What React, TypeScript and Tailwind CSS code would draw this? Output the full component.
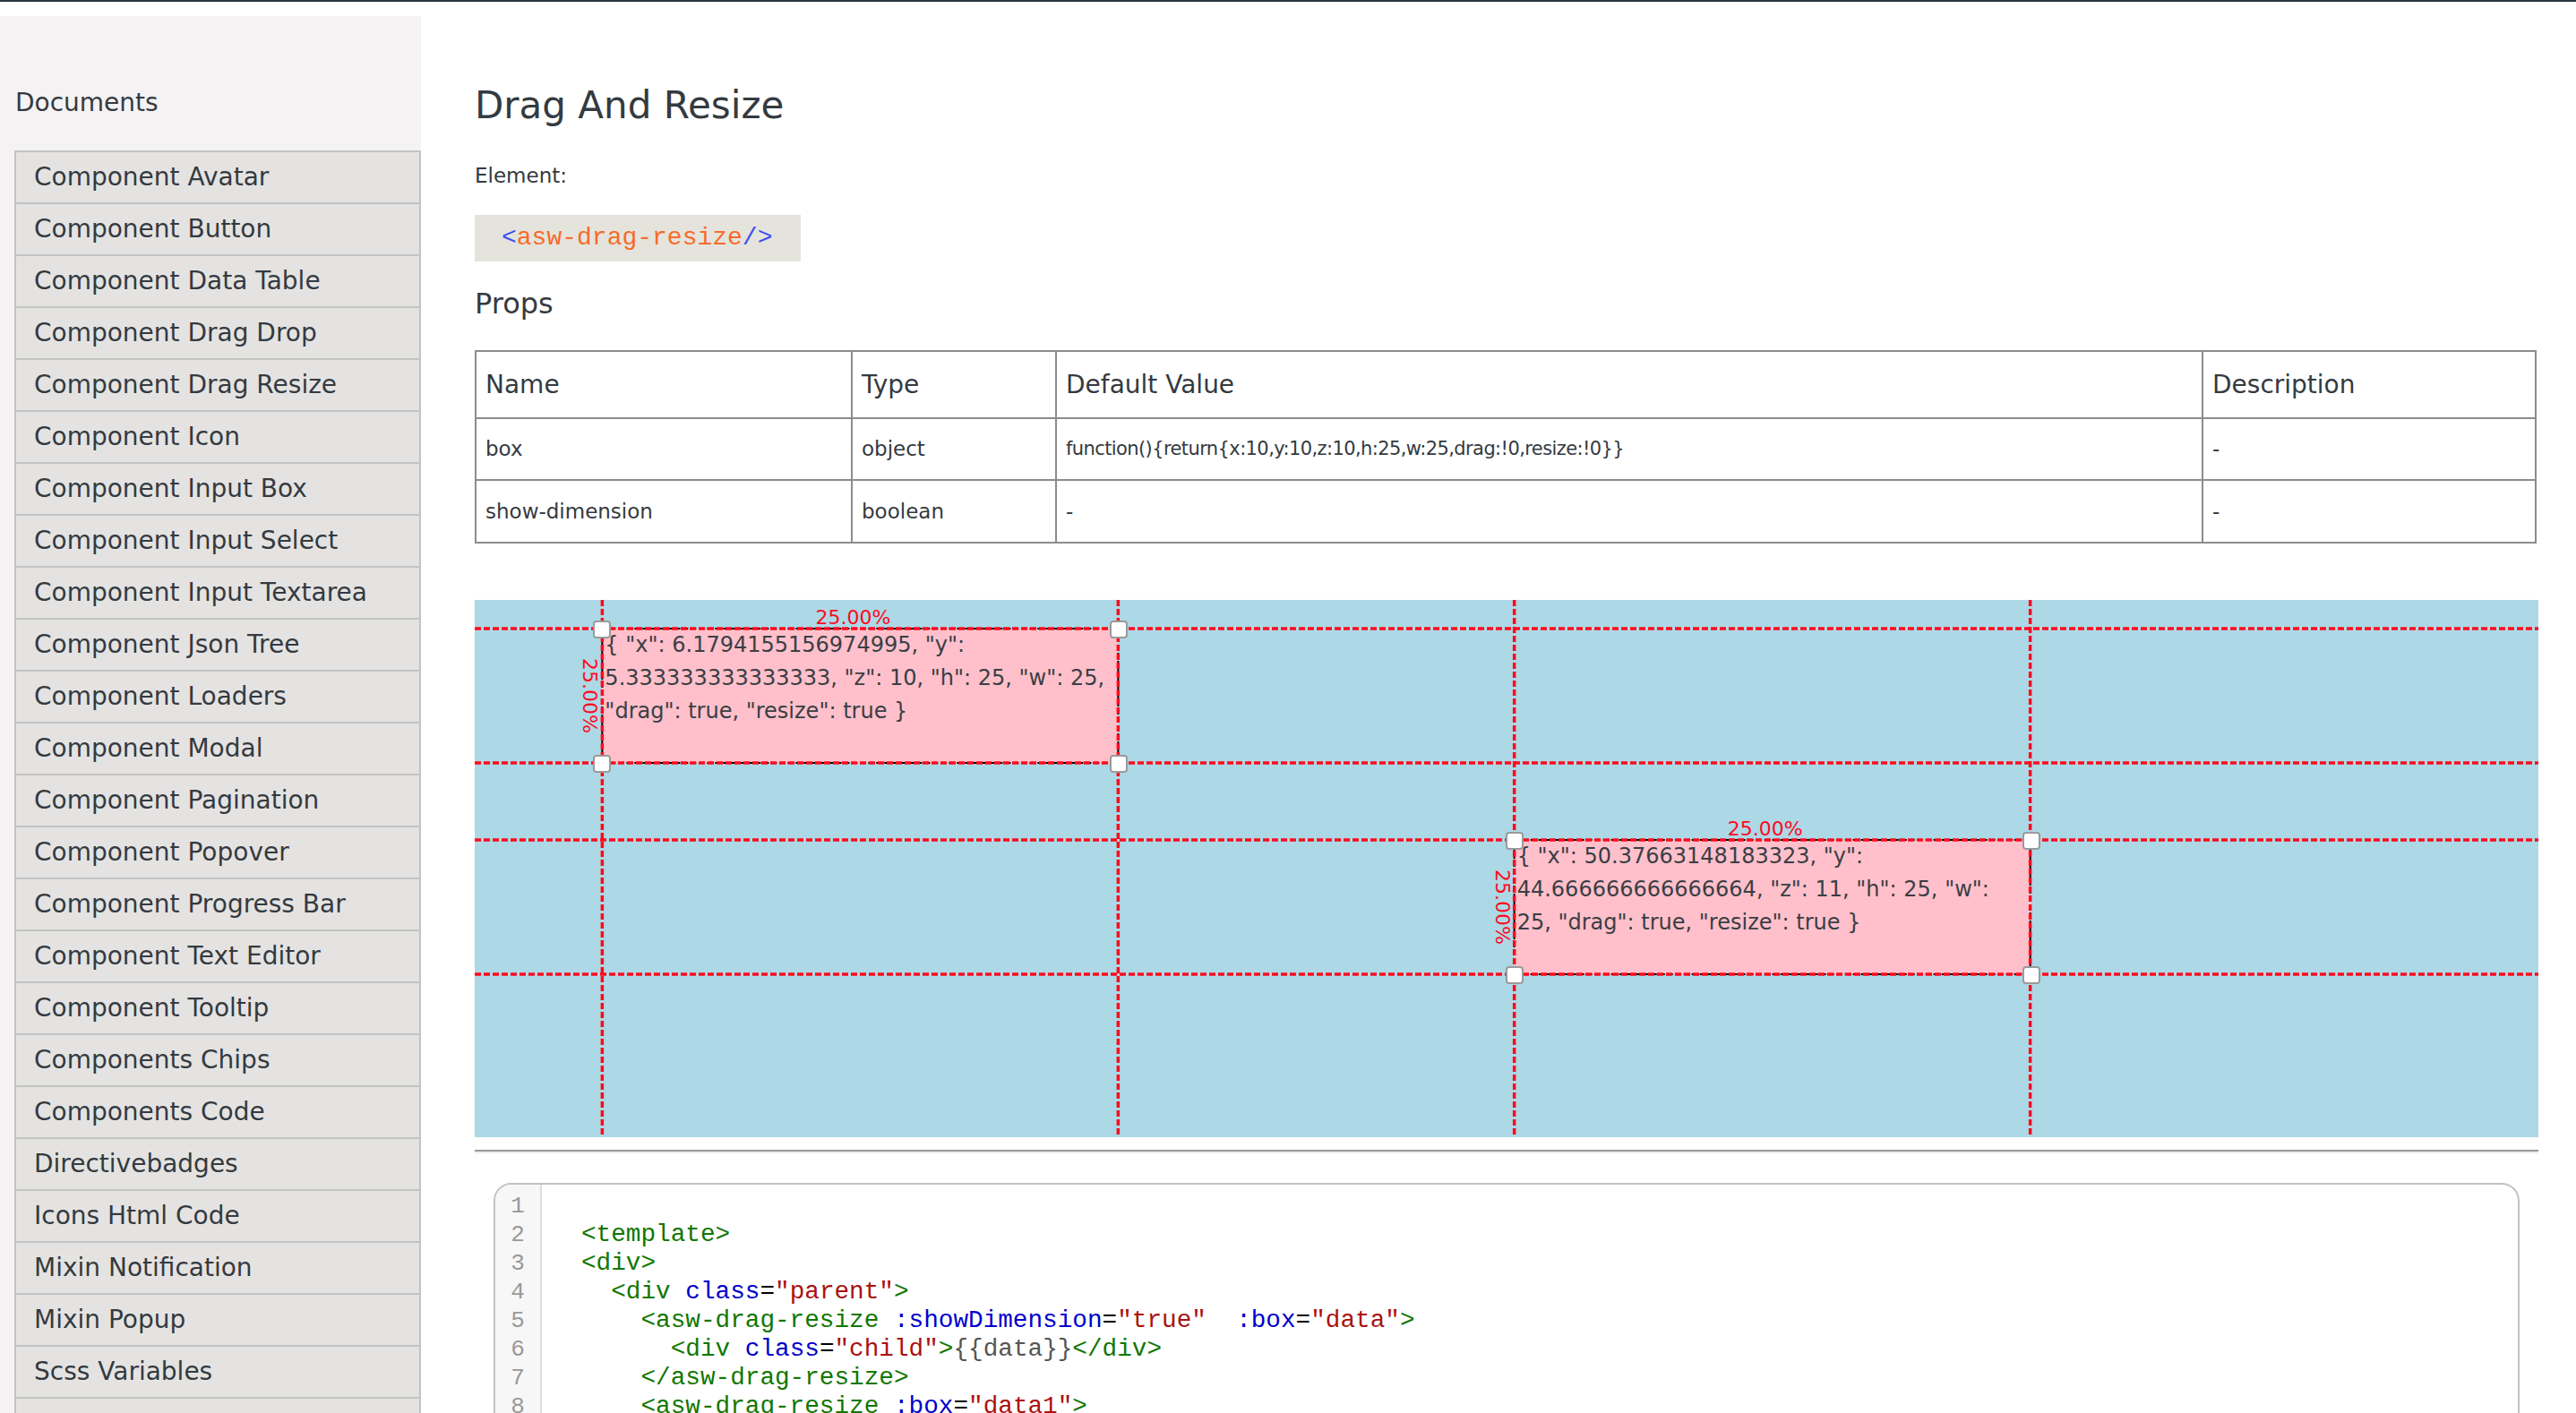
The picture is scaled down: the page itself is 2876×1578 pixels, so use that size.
import React from "react";

type Box = {
  x: number;
  y: number;
  z: number;
  h: number;
  w: number;
  drag: boolean;
  resize: boolean;
};

const docs = [
  "Component Avatar",
  "Component Button",
  "Component Data Table",
  "Component Drag Drop",
  "Component Drag Resize",
  "Component Icon",
  "Component Input Box",
  "Component Input Select",
  "Component Input Textarea",
  "Component Json Tree",
  "Component Loaders",
  "Component Modal",
  "Component Pagination",
  "Component Popover",
  "Component Progress Bar",
  "Component Text Editor",
  "Component Tooltip",
  "Components Chips",
  "Components Code",
  "Directivebadges",
  "Icons Html Code",
  "Mixin Notification",
  "Mixin Popup",
  "Scss Variables",
];

const items: { box: Box; lines: string[] }[] = [
  {
    box: { x: 6.1794155156974995, y: 5.333333333333333, z: 10, h: 25, w: 25, drag: true, resize: true },
    lines: [
      '{ "x": 6.1794155156974995, "y":',
      '5.333333333333333, "z": 10, "h": 25, "w": 25,',
      '"drag": true, "resize": true }',
    ],
  },
  {
    box: { x: 50.37663148183323, y: 44.666666666666664, z: 11, h: 25, w: 25, drag: true, resize: true },
    lines: [
      '{ "x": 50.37663148183323, "y":',
      '44.666666666666664, "z": 11, "h": 25, "w":',
      '25, "drag": true, "resize": true }',
    ],
  },
];

const Tag = ({ children }: { children: React.ReactNode }) => (
  <span className="text-[#117700]">{children}</span>
);
const Attr = ({ children }: { children: React.ReactNode }) => (
  <span className="text-[#0000cc]">{children}</span>
);
const Str = ({ children }: { children: React.ReactNode }) => (
  <span className="text-[#aa1111]">{children}</span>
);

const codeLines: React.ReactNode[] = [
  "",
  <Tag>&lt;template&gt;</Tag>,
  <Tag>&lt;div&gt;</Tag>,
  <>
    {"  "}
    <Tag>&lt;div</Tag> <Attr>class</Attr>=<Str>"parent"</Str>
    <Tag>&gt;</Tag>
  </>,
  <>
    {"    "}
    <Tag>&lt;asw-drag-resize</Tag> <Attr>:showDimension</Attr>=<Str>"true"</Str>
    {"  "}
    <Attr>:box</Attr>=<Str>"data"</Str>
    <Tag>&gt;</Tag>
  </>,
  <>
    {"      "}
    <Tag>&lt;div</Tag> <Attr>class</Attr>=<Str>"child"</Str>
    <Tag>&gt;</Tag>
    <span className="text-[#555]">{"{{data}}"}</span>
    <Tag>&lt;/div&gt;</Tag>
  </>,
  <>
    {"    "}
    <Tag>&lt;/asw-drag-resize&gt;</Tag>
  </>,
  <>
    {"    "}
    <Tag>&lt;asw-drag-resize</Tag> <Attr>:box</Attr>=<Str>"data1"</Str>
    <Tag>&gt;</Tag>
  </>,
  <>
    {"      "}
    <Tag>&lt;div</Tag> <Attr>class</Attr>=<Str>"child"</Str>
    <Tag>&gt;</Tag>
    <span className="text-[#555]">{"{{data1}}"}</span>
    <Tag>&lt;/div&gt;</Tag>
  </>,
  <>
    {"    "}
    <Tag>&lt;/asw-drag-resize&gt;</Tag>
  </>,
  <>
    {"  "}
    <Tag>&lt;/div&gt;</Tag>
  </>,
  <Tag>&lt;/div&gt;</Tag>,
  <Tag>&lt;/template&gt;</Tag>,
];

const cellBase =
  "flex items-center border-r-2 border-b-2 border-[#8c8c8c] pl-[10px] whitespace-nowrap";

const DragArea = () => (
  <div className="relative mt-[63px] h-[600px] w-full bg-[#add8e6]">
    {items.map(({ box, lines }, i) => (
      <div
        key={i}
        className="absolute bg-[#ffc0cb] text-[24px] leading-[37px] text-[#3a3e44]"
        style={{ left: `${box.x}%`, top: `${box.y}%`, width: `${box.w}%`, height: `${box.h}%` }}
      >
        <div className="pl-[3px]">
          {lines.map((l) => (
            <div key={l} className="whitespace-nowrap">
              {l}
            </div>
          ))}
        </div>
        <div className="absolute bottom-full left-[calc(50%-8px)] z-20 -translate-x-1/2 whitespace-nowrap text-[22px] leading-[24px] text-[#ff0a1e]">
          {box.w.toFixed(2)}%
        </div>
        <div className="absolute top-1/2 left-[-14px] z-20 -translate-x-1/2 -translate-y-1/2 rotate-90 whitespace-nowrap text-[22px] leading-[24px] text-[#ff0a1e]">
          {box.h.toFixed(2)}%
        </div>
        <span className="absolute -left-[10px] -top-[9px] z-20 h-[20px] w-[20px] rounded-[4px] border-2 border-[#9a9a9a] bg-white" />
        <span className="absolute -right-[11px] -top-[9px] z-20 h-[20px] w-[20px] rounded-[4px] border-2 border-[#9a9a9a] bg-white" />
        <span className="absolute -left-[10px] -bottom-[11px] z-20 h-[20px] w-[20px] rounded-[4px] border-2 border-[#9a9a9a] bg-white" />
        <span className="absolute -right-[11px] -bottom-[11px] z-20 h-[20px] w-[20px] rounded-[4px] border-2 border-[#9a9a9a] bg-white" />
      </div>
    ))}
    <svg className="pointer-events-none absolute inset-0 z-10 h-full w-full">
      {items.map(({ box }, i) => {
        const x2 = box.x + box.w;
        const y2 = box.y + box.h;
        return (
          <g key={i}>
            <rect
              x={`${box.x}%`}
              y={`${box.y}%`}
              width={`${box.w}%`}
              height={`${box.h}%`}
              fill="none"
              stroke="#000"
              strokeWidth="2"
              strokeDasharray="6 3"
            />
            {[box.x, x2].map((v) => (
              <line key={"v" + v} x1={`${v}%`} x2={`${v}%`} y1="0" y2="100%" stroke="#ff0a1e" strokeWidth="3.5" strokeDasharray="7 3" />
            ))}
            {[box.y, y2].map((v) => (
              <line key={"h" + v} x1="0" x2="100%" y1={`${v}%`} y2={`${v}%`} stroke="#ff0a1e" strokeWidth="3.5" strokeDasharray="7 3" />
            ))}
          </g>
        );
      })}
    </svg>
  </div>
);

export default function App() {
  return (
    <div className="min-h-screen bg-white font-['DejaVu_Sans',sans-serif] text-[#343a40]">
      <div className="h-[2px] bg-[#2b3640]" />
      <div className="flex">
        <aside className="mt-[16px] min-h-[1560px] w-[470px] shrink-0 bg-[#f4f2f3]">
          <div className="h-[150px] pl-[17px] pt-[81px] text-[28px] leading-[32px]">Documents</div>
          <ul className="ml-[16px] border-x-2 border-[#c3c3c3]">
            {docs.map((d) => (
              <li
                key={d}
                className="h-[58px] border-t-2 border-[#c3c3c3] bg-[#e4e3e2] pl-[20px] text-[28px] leading-[56px] whitespace-nowrap"
              >
                {d}
              </li>
            ))}
            <li className="h-[58px] border-t-2 border-[#c3c3c3] bg-[#e4e3e2]" />
          </ul>
        </aside>

        <main className="ml-[60px] w-[2304px] pt-[92px]">
          <h1 className="text-[42px] leading-[48px]">Drag And Resize</h1>
          <p className="mt-[40px] text-[23px] leading-[28px]">Element:</p>
          <div className="mt-[30px] h-[52px] w-[364px] bg-[#e4e4dd] pl-[30px] font-['Liberation_Mono',monospace] text-[28px] leading-[52px]">
            <span className="text-[#3d4ff0]">&lt;</span>
            <span className="text-[#f86a2c]">asw-drag-resize</span>
            <span className="text-[#3d4ff0]">/&gt;</span>
          </div>
          <h2 className="mt-[28px] text-[32px] leading-[38px]">Props</h2>

          <div className="mt-[33px] grid w-[2302px] grid-cols-[420px_228px_1280px_1fr] border-t-2 border-l-2 border-[#8c8c8c]">
            {["Name", "Type", "Default Value", "Description"].map((h) => (
              <div key={h} className={`${cellBase} h-[75px] text-[28px]`}>
                {h}
              </div>
            ))}
            <div className={`${cellBase} h-[69px] text-[23px]`}>box</div>
            <div className={`${cellBase} h-[69px] text-[23px]`}>object</div>
            <div className={`${cellBase} h-[69px] text-[21px] tracking-[-0.6px]`}>
              {"function(){return{x:10,y:10,z:10,h:25,w:25,drag:!0,resize:!0}}"}
            </div>
            <div className={`${cellBase} h-[69px] text-[23px]`}>-</div>
            <div className={`${cellBase} h-[70px] text-[23px]`}>show-dimension</div>
            <div className={`${cellBase} h-[70px] text-[23px]`}>boolean</div>
            <div className={`${cellBase} h-[70px] text-[23px]`}>-</div>
            <div className={`${cellBase} h-[70px] text-[23px]`}>-</div>
          </div>

          <DragArea />

          <div className="mt-[14px] border-t-2 border-b-2 border-t-[#999999] border-b-[#ececec]" />

          <div className="mx-[21px] mt-[33px] flex overflow-hidden rounded-t-[20px] border-2 border-[#c2c2c2]">
            <div className="w-[52px] shrink-0 border-r-2 border-[#dddddd] bg-[#f7f7f7] pt-[8px] text-center font-['Liberation_Mono',monospace] text-[26px] leading-[32px] text-[#999999]">
              {codeLines.map((_, i) => (
                <div key={i}>{i + 1}</div>
              ))}
            </div>
            <div className="flex-1 pl-[44px] pt-[8px] font-['Liberation_Mono',monospace] text-[27.7px] leading-[32px] text-black">
              {codeLines.map((l, i) => (
                <div key={i} className="h-[32px] whitespace-pre">
                  {l}
                </div>
              ))}
            </div>
          </div>
        </main>
      </div>
    </div>
  );
}
